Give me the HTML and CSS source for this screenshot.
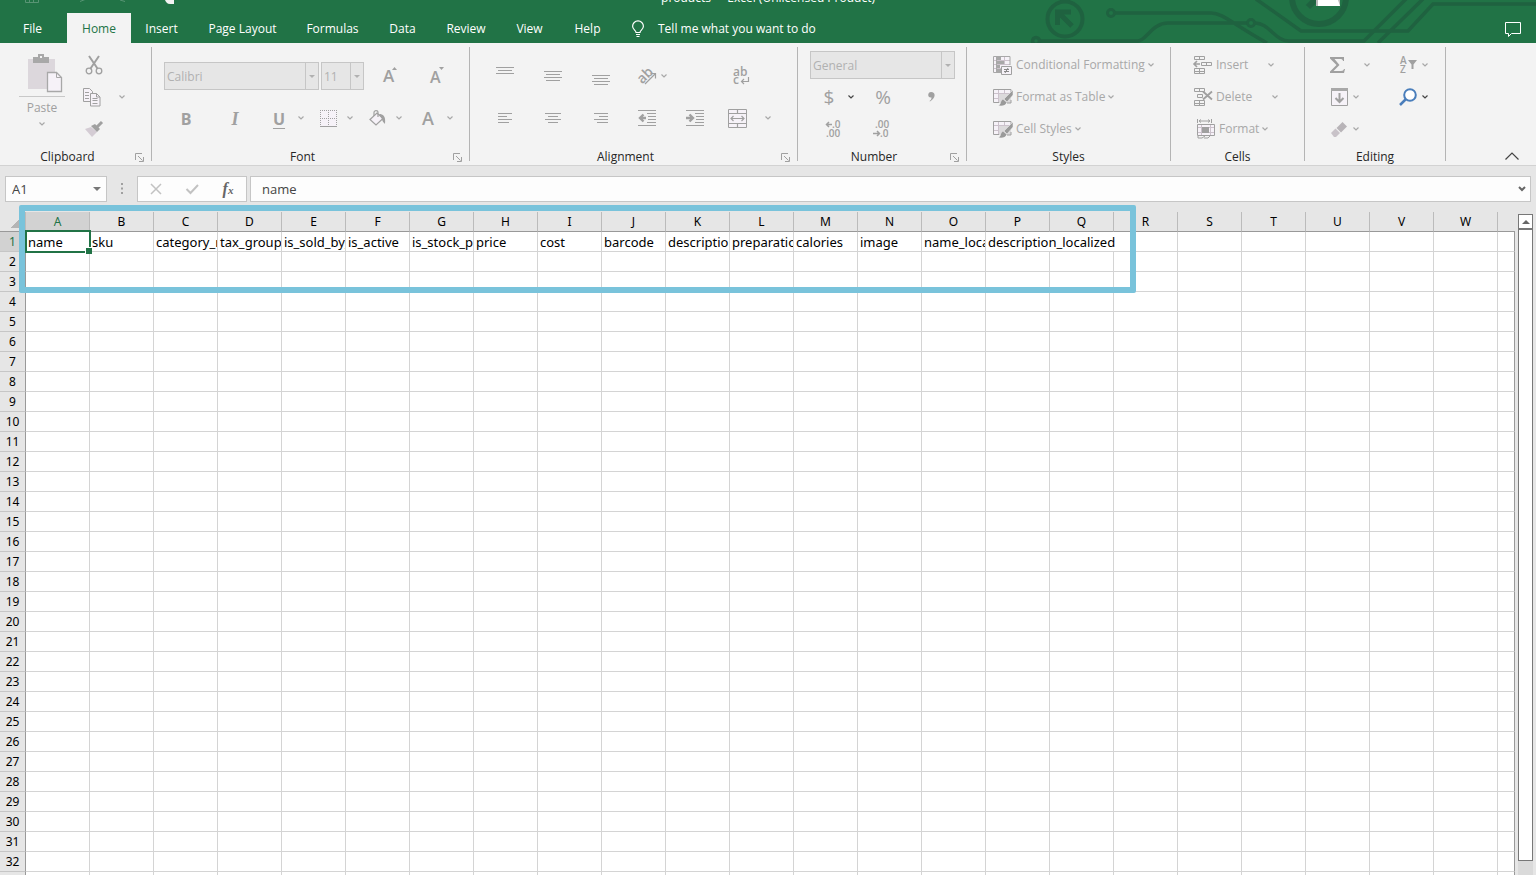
FILE: index.html
```
<!DOCTYPE html>
<html lang="en">
<head>
    <meta charset="UTF-8">
    <meta name="viewport" content="width=device-width, initial-scale=1.0">
    <title>products - Excel</title>
    <link rel="stylesheet" href="styles.css">
</head>
<body>

    <svg class="defs" aria-hidden="true">
        <symbol id="chev" viewBox="0 0 6 4"><path d="M.5 .5 3 3 5.500 .5" fill="none" stroke="currentColor" stroke-width="1.2"/></symbol>
        <symbol id="launch" viewBox="0 0 9 9"><path d="M.5 7V.5H7M3 3l4.500 4.500M8.500 4v4.500H4" fill="none" stroke="currentColor"/></symbol>
        <symbol id="brush-table" viewBox="0 0 20 18">
            <path d="M1 1h17v14H1z" fill="#f6f2f8"/>
            <path d="M6 6h12v9H6z" fill="#dcdadc"/>
            <path d="M5.500 1v14M11.500 1v5M1 5.500h17M1 10.500h5" stroke="#ccc2cc" fill="none"/>
            <path d="M18 5V1.500H.5v13H6M18 12v3h-4" fill="none" stroke="#a0a0a0"/>
            <path d="M20 2v5l-6 7-3-3z" fill="#9a9a9a" stroke="#f3f3f3" stroke-width=".5"/>
            <path d="M10 11.500l3.500 3c-1 3-4 3.500-8 3 3-1 2-5 4.500-6z" fill="#9a9a9a"/>
        </symbol>
    </svg>

    <header class="top">
        <svg class="circuit" viewBox="0 0 496 43" aria-hidden="true">
            <g fill="none" stroke="#1f6240" stroke-width="3.500">
                <circle cx="25" cy="19" r="17.500" stroke-width="4"/>
                <path d="M32 26 18 12M17.500 25V12H31" stroke-width="5"/>
                <circle cx="71" cy="13" r="3.500" stroke-width="3"/>
                <path d="M75 13h96c12 0 20 10 56 30M0 41h98c8 0 14-18 30-18h79"/>
                <circle cx="-4" cy="41" r="3.500"/>
                <circle cx="211" cy="23" r="3.500" stroke-width="3"/>
                <path d="M215 23c14 0 20 18 34 18h75L368-3M216-1l45 32h107l25-27h103M338 43 385-3"/>
                <circle cx="279" cy="-3" r="27" stroke-width="6"/>
                <path d="M268 7l12-12" stroke-width="6"/>
            </g>
            <path d="M276 0h24v6h-24z" fill="#b9b9b9"/>
            <path d="M278 0h20l2 6h-22z" fill="#fff"/>
        </svg>
        <div class="titlebar">
            <svg class="quick" width="160" height="5" viewBox="0 0 160 5" aria-hidden="true">
                <path d="M.5 0v2.500h13V0M4.500 2V0M8.500 2V0" fill="none" stroke="#589474"/>
                <path d="M55 1.500l5-2M95 0l5 1.500" stroke="#589474"/>
                <path d="M140 0h9v4h-4c-3 0-4-2-5-4z" fill="#f3f3f3"/>
            </svg>
            <div class="title">products&nbsp; -&nbsp; Excel (Unlicensed Product)</div>
        </div>
        <nav class="tabs">
            <a href="#">File</a>
            <a href="#" class="active">Home</a>
            <a href="#">Insert</a>
            <a href="#">Page Layout</a>
            <a href="#">Formulas</a>
            <a href="#">Data</a>
            <a href="#">Review</a>
            <a href="#">View</a>
            <a href="#">Help</a>
            <a href="#" class="tell">
                <svg width="12" height="17" viewBox="0 0 12 17"><path d="M4 11.500c0-2-3.400-3-3.400-6.200a5.200 5.200 0 0 1 10.800 0C11.400 8.500 8 9.500 8 11.500zM4 13.500h4M4.500 15.500h3" fill="none" stroke="#fff" stroke-width="1.200"/></svg>
                Tell me what you want to do
            </a>
            <button class="comment" aria-label="Comments">
                <svg width="16" height="15" viewBox="0 0 16 15"><path d="M.5.5h15v11h-9l-3 3v-3h-3z" fill="none" stroke="#fff"/></svg>
            </button>
        </nav>
    </header>

    <section class="ribbon">
        <div class="group clipboard">
            <div class="body">
                <button class="paste">
                    <svg width="36" height="39" viewBox="0 0 36 39">
                        <path d="M1 5h27v30H1z" fill="#dcd7dc"/>
                        <path d="M6 3h5V0h6v3h5v6H6z" fill="#a8a8a8"/><path d="M13 2h2v2h-2z" fill="#f3f3f3"/>
                        <path d="M20.500 18.500h9l5 5v14h-14z" fill="#f6f2f8" stroke="#a8a8a8" stroke-width="1.300"/>
                        <path d="M29.500 18.500v5h5" fill="none" stroke="#a8a8a8"/>
                    </svg>
                    <span>Paste</span>
                    <svg class="chev"><use href="#chev"/></svg>
                </button>
                <div class="stack">
                    <button class="tool" aria-label="Cut"><i><svg width="18" height="19" viewBox="0 0 18 19"><g fill="none" stroke="#a0a0a0" stroke-width="1.300"><circle cx="4" cy="15" r="2.800"/><circle cx="14" cy="15" r="2.800"/></g><path d="M4 0l8.500 12.500M14 0 5.500 12.500" stroke="#a0a0a0" stroke-width="2"/></svg></i></button>
                    <button class="tool copy" aria-label="Copy"><i><svg width="18" height="19" viewBox="0 0 18 19"><path d="M.5.5h6l3 3v10h-9z" fill="#f6f2f8" stroke="#a0a0a0"/><path d="M2 4.500h4M2 7.500h4M2 10.500h4" stroke="#a0a0a0"/><path d="M7.500 5.500h6l3.500 3.500v9H7.500z" fill="#f6f2f8" stroke="#a0a0a0"/><path d="M13.500 5.500V9H17M9.500 10.500h5M9.500 12.500h5M9.500 15.500h5" fill="none" stroke="#a0a0a0"/></svg></i><svg class="chev"><use href="#chev"/></svg></button>
                    <button class="tool" aria-label="Format Painter"><i><svg width="18" height="16" viewBox="0 0 18 16"><path d="M0 8l6-2 6 5-5 5z" fill="#d4ccd4"/><path d="M6 5l4-2 5 5-3 3z" fill="#a0a0a0"/><path d="M12 6l5-5" stroke="#a0a0a0" stroke-width="3"/></svg></i></button>
                </div>
            </div>
            <div class="label"><span>Clipboard</span><button aria-label="Clipboard settings"><svg width="9" height="9"><use href="#launch"/></svg></button></div>
        </div>

        <div class="group font">
            <div class="body two">
                <div class="row font-top">
                    <div class="combo"><select disabled aria-label="Font"><option>Calibri</option></select><b></b></div>
                    <div class="combo"><select disabled aria-label="Font size"><option>11</option></select><b></b></div>
                    <button class="tool" aria-label="Increase font size"><i><svg width="16" height="22" viewBox="0 0 16 22"><text x="1" y="17" class="glyph" font-size="17">A</text><path d="M10 5l2.500-3L15 5z" fill="#a0a0a0"/></svg></i></button>
                    <button class="tool" aria-label="Decrease font size"><i><svg width="16" height="22" viewBox="0 0 16 22"><text x="1" y="18" class="glyph" font-size="16">A</text><path d="M10 2l2.500 3L15 2z" fill="#a0a0a0"/></svg></i></button>
                </div>
                <div class="row font-bottom">
                    <button class="tool bold"><i>B</i></button>
                    <button class="tool italic"><i>I</i></button>
                    <button class="tool under"><i>U</i><svg class="chev"><use href="#chev"/></svg></button>
                    <button class="tool" aria-label="Borders"><i><svg width="17" height="17" viewBox="0 0 17 17"><path d="M0 0h17v17H0z" fill="#f6f2f8"/><path d="M0 .5h17M0 8.500h17M.5 0v17M8.500 0v17M16.500 0v17" stroke="#a0a0a0" stroke-dasharray="1 1"/><path d="M0 16.500h17" stroke="#a0a0a0"/></svg></i><svg class="chev"><use href="#chev"/></svg></button>
                    <button class="tool" aria-label="Fill colour"><i><svg width="17" height="16" viewBox="0 0 17 16"><path d="M1 9.500 8 3l6 5.500-7 6.500z" fill="#f6f2f8" stroke="#a0a0a0" stroke-width="1.200"/><path d="M5 6V2.500C5 0 9 0 9 2.500V7" fill="none" stroke="#a0a0a0" stroke-width="1.200"/><path d="M10 4c4 0 7 2 6 10-1-1-3-3-3-5z" fill="#a0a0a0"/></svg></i><svg class="chev"><use href="#chev"/></svg></button>
                    <button class="tool bold letter"><i>A</i><svg class="chev"><use href="#chev"/></svg></button>
                </div>
            </div>
            <div class="label"><span>Font</span><button aria-label="Font settings"><svg width="9" height="9"><use href="#launch"/></svg></button></div>
        </div>

        <div class="group align">
            <div class="body two">
                <div class="row align-top">
                    <button class="tool" aria-label="Top align"><i><svg width="18" height="19" viewBox="0 0 18 19"><path d="M0 .5h18M2 3.500h14M0 6.500h18" stroke="#a0a0a0"/></svg></i></button>
                    <button class="tool" aria-label="Middle align"><i><svg width="18" height="19" viewBox="0 0 18 19"><path d="M0 4.500h18M2 7.500h14M0 10.500h18M2 13.500h14" stroke="#a0a0a0"/></svg></i></button>
                    <button class="tool" aria-label="Bottom align"><i><svg width="18" height="19" viewBox="0 0 18 19"><path d="M0 8.500h18M2 11.500h14M0 14.500h18M2 17.500h14" stroke="#a0a0a0"/></svg></i></button>
                    <button class="tool orient" aria-label="Orientation"><i><svg width="20" height="18" viewBox="0 0 20 18"><text x="-8" y="4" class="glyph" font-size="14" transform="translate(8 9) rotate(-45)">ab</text><path d="M8 17 18 7M13.500 6.500H18.500v5" fill="none" stroke="#a0a0a0" stroke-width="1.200"/></svg></i><svg class="chev"><use href="#chev"/></svg></button>
                    <button class="tool" aria-label="Wrap text"><i><svg width="17" height="19" viewBox="0 0 17 19"><text x="0" y="9" class="glyph" font-size="12">ab</text><text x="0" y="17" class="glyph" font-size="12">c</text><path d="M15.500 10v4.500H8.500M11 12l-2.500 2.500L11 17" fill="none" stroke="#a0a0a0" stroke-width="1.200"/></svg></i></button>
                </div>
                <div class="row align-bottom">
                    <button class="tool" aria-label="Align left"><i><svg width="14" height="11" viewBox="0 0 14 11"><path d="M0 .5h14M0 3.500h9M0 6.500h14M0 9.500h11" stroke="#a0a0a0"/></svg></i></button>
                    <button class="tool" aria-label="Center"><i><svg width="16" height="11" viewBox="0 0 16 11"><path d="M0 .5h16M3 3.500h10M0 6.500h16M3 9.500h10" stroke="#a0a0a0"/></svg></i></button>
                    <button class="tool" aria-label="Align right"><i><svg width="14" height="11" viewBox="0 0 14 11"><path d="M0 .5h14M5 3.500h9M0 6.500h14M3 9.500h11" stroke="#a0a0a0"/></svg></i></button>
                    <button class="tool" aria-label="Decrease indent"><i><svg width="18" height="16" viewBox="0 0 18 16"><path d="M0 .5h18M9 3.500h9M10 6.500h8M10 9.500h8M9 12.500h9M0 15.500h18" stroke="#a0a0a0"/><path d="M8 8H2M5.500 4.500 2 8l3.500 3.500" fill="none" stroke="#a0a0a0" stroke-width="2.400"/></svg></i></button>
                    <button class="tool" aria-label="Increase indent"><i><svg width="18" height="16" viewBox="0 0 18 16"><path d="M0 .5h18M9 3.500h9M10 6.500h8M10 9.500h8M9 12.500h9M0 15.500h18" stroke="#a0a0a0"/><path d="M0 8h6M3.500 4.500 7 8l-3.500 3.500" fill="none" stroke="#a0a0a0" stroke-width="2.400"/></svg></i></button>
                    <button class="tool merge" aria-label="Merge and center"><i><svg width="19" height="19" viewBox="0 0 19 19"><path d="M.5.5h18v18H.5z" fill="#f6f2f8" stroke="#a0a0a0"/><path d="M0 4.500h19M0 14.500h19M9.500 0v4.500M9.500 14.500V19M2.500 9.500h14M5.500 7 3 9.500 5.500 12M13.500 7 16 9.500 13.500 12" fill="none" stroke="#a0a0a0" stroke-width="1.200"/></svg></i><svg class="chev"><use href="#chev"/></svg></button>
                </div>
            </div>
            <div class="label"><span>Alignment</span><button aria-label="Alignment settings"><svg width="9" height="9"><use href="#launch"/></svg></button></div>
        </div>

        <div class="group number">
            <div class="body">
                <div class="row"><div class="combo"><select disabled aria-label="Number format"><option>General</option></select><b></b></div></div>
                <div class="row number-mid">
                    <button class="tool big dark"><i>$</i><svg class="chev"><use href="#chev"/></svg></button>
                    <button class="tool big"><i>%</i></button>
                    <button class="tool" aria-label="Comma style"><i><svg width="7" height="10" viewBox="0 0 7 10"><path d="M3 0c5 0 5 6-1 9.500L1.500 9C3 8 3.500 7 3.500 5.500-1 6-.5 0 3 0z" fill="#a0a0a0"/></svg></i></button>
                </div>
                <div class="row number-low">
                    <button class="tool" aria-label="Increase decimal"><i><svg width="17" height="18" viewBox="0 0 17 18"><text x="7" y="8" class="small">.0</text><text x="1" y="17" class="small">.00</text><path d="M7 4.500H1.500M4 2 1.500 4.500 4 7" fill="none" stroke="#a0a0a0" stroke-width="1.500"/></svg></i></button>
                    <button class="tool" aria-label="Decrease decimal"><i><svg width="17" height="18" viewBox="0 0 17 18"><text x="2" y="8" class="small">.00</text><text x="7" y="17" class="small">.0</text><path d="M0 13.500h6M4 11l2.500 2.500L4 16" fill="none" stroke="#a0a0a0" stroke-width="1.500"/></svg></i></button>
                </div>
            </div>
            <div class="label"><span>Number</span><button aria-label="Number settings"><svg width="9" height="9"><use href="#launch"/></svg></button></div>
        </div>

        <div class="group styles">
            <div class="body">
                <button class="wide"><svg width="20" height="19" viewBox="0 0 20 19"><path d="M.5.500h16v16H.5z" fill="#f6f2f8"/><path d="M4 1h4v3H4zM4 5h7v3H4zM4 9h3v3H4zM4 13h4v3H4z" fill="#a8a8a8"/><path d="M1 4.500h16M1 8.500h16M1 12.500h8M11.500 1v8" stroke="#ccc2cc"/><path d="M17 9V.5H.5v16H8M3.500 0v17" fill="none" stroke="#a8a8a8"/><path d="M8.500 10.500h10v8h-10z" fill="#f6f2f8" stroke="#a0a0a0"/><path d="M11 13.500h5M11 15.500h5M15 12l-3 5" stroke="#888"/></svg><span>Conditional Formatting</span><svg class="chev"><use href="#chev"/></svg></button>
                <button class="wide"><svg width="20" height="18"><use href="#brush-table"/></svg><span>Format as Table</span><svg class="chev"><use href="#chev"/></svg></button>
                <button class="wide"><svg width="20" height="18"><use href="#brush-table"/></svg><span>Cell Styles</span><svg class="chev"><use href="#chev"/></svg></button>
            </div>
            <div class="label"><span>Styles</span></div>
        </div>

        <div class="group cells">
            <div class="body">
                <button class="wide far"><svg width="20" height="20" viewBox="0 0 20 20"><path d="M1.500 1.500h10v3h-10zM6.500 1.500v3M1.500 13.500h10v5h-10zM1 16.500h10M6.500 13.500v5M8.500 7.500h10v3h-10zM13.500 7.500v3" fill="none" stroke="#a0a0a0"/><path d="M7 9H1M4 6 1 9l3 3" fill="none" stroke="#a0a0a0" stroke-width="1.600"/></svg><span>Insert</span><svg class="chev"><use href="#chev"/></svg></button>
                <button class="wide far"><svg width="20" height="20" viewBox="0 0 20 20"><path d="M1.500 1.500h10v3h-10zM6.500 1.500v3M1.500 13.500h10v5h-10zM1 16.500h10M6.500 13.500v5M4.500 7.500h5v3h-5z" fill="none" stroke="#a0a0a0"/><path d="M10 4.500l9 8M19 4.500l-9 8" stroke="#a0a0a0" stroke-width="1.800"/></svg><span>Delete</span><svg class="chev"><use href="#chev"/></svg></button>
                <button class="wide format"><svg width="20" height="20" viewBox="0 0 20 20"><path d="M1.500 0v4M15.500 0v4M3 2h11M5 .5 3 2l2 1.500M12 .5 14 2l-2 1.500" fill="none" stroke="#a0a0a0"/><path d="M1.500 5.500h17v11h-17z" fill="#f6f2f8" stroke="#a0a0a0"/><path d="M5.500 6v10M14.500 6v10M2 8.500h16M2 13.500h16" stroke="#ccc2cc"/><path d="M6 8h7v6H6z" fill="#a0a0a0"/><path d="M2 17v2h4l3-2M8 19h4l2-2" fill="none" stroke="#a0a0a0"/></svg><span>Format</span><svg class="chev"><use href="#chev"/></svg></button>
            </div>
            <div class="label"><span>Cells</span></div>
        </div>

        <div class="group editing">
            <div class="body">
                <div class="row edit-row">
                    <button class="tool sum" aria-label="AutoSum"><i><svg width="15" height="16" viewBox="0 0 15 16"><path d="M0 0h14v4h-1c0-1-1-2-2-2H4.500L9.500 8l-6 6H11c2 0 2.500-1 3-2h1l-1 4H0v-1.500L6.500 8 0 1.500z" fill="#a0a0a0"/></svg></i><svg class="chev"><use href="#chev"/></svg></button>
                    <button class="tool" aria-label="Sort and filter"><i><svg width="17" height="17" viewBox="0 0 17 17"><text x="0" y="7" class="small">A</text><text x="0" y="16" class="small">Z</text><path d="M8 3h9l-3.500 4.500V12h-2V7.500z" fill="#a0a0a0"/></svg></i><svg class="chev"><use href="#chev"/></svg></button>
                </div>
                <div class="row edit-row">
                    <button class="tool" aria-label="Fill"><i><svg width="17" height="18" viewBox="0 0 17 18"><path d="M.5.500h16v17H.5z" fill="#f6f2f8" stroke="#a0a0a0"/><path d="M0 0h17v3H0z" fill="#a8a8a8"/><path d="M8.500 5v9M4.500 10l4 4 4-4" fill="none" stroke="#a0a0a0" stroke-width="2"/></svg></i><svg class="chev"><use href="#chev"/></svg></button>
                    <button class="tool dark" aria-label="Find and select"><i><svg width="18" height="18" viewBox="0 0 18 18"><circle cx="11" cy="7" r="5.800" fill="#fff" stroke="#4a7ebb" stroke-width="2"/><path d="M7 11l-6 6" stroke="#4a7ebb" stroke-width="2.500"/></svg></i><svg class="chev"><use href="#chev"/></svg></button>
                </div>
                <div class="row edit-row">
                    <button class="tool" aria-label="Clear"><i><svg width="16" height="15" viewBox="0 0 16 15"><path d="M5.500 6l6-6L16 4.500l-6 6z" fill="#b8b4b8"/><path d="M0 11l4.500-4.500L9 11l-4 4H3z" fill="#c8c2c8"/></svg></i><svg class="chev"><use href="#chev"/></svg></button>
                </div>
            </div>
            <div class="label"><span>Editing</span></div>
        </div>

        <button class="collapse" aria-label="Collapse the ribbon"><svg width="14" height="8" viewBox="0 0 14 8"><path d="M.5 7.500 7 1l6.500 6.500" fill="none" stroke="#444" stroke-width="1.200"/></svg></button>
    </section>

    <section class="formula-bar">
        <div class="name-box"><input type="text" value="A1" aria-label="Name box"><b></b></div>
        <svg width="3" height="12" viewBox="0 0 3 12" aria-hidden="true"><path d="M0 1h2M0 5.500h2M0 10h2" stroke="#a0a0a0" stroke-width="2"/></svg>
        <div class="fx-box">
            <button aria-label="Cancel"><svg width="12" height="10" viewBox="0 0 12 10"><path d="M1 0l10 10M11 0 1 10" stroke="#c2c2c2" stroke-width="1.500"/></svg></button>
            <button aria-label="Enter"><svg width="13" height="10" viewBox="0 0 13 10"><path d="M.5 5l4 4L12 1" fill="none" stroke="#c2c2c2" stroke-width="2"/></svg></button>
            <button class="fx">f<small>x</small></button>
        </div>
        <div class="formula"><input type="text" value="name" aria-label="Formula"><svg width="8" height="6" viewBox="0 0 8 6"><path d="M1 1l3 3 3-3" fill="none" stroke="#666" stroke-width="2"/></svg></div>
    </section>

    <main class="workbook">
        <div class="sheet">
            <table>
                <thead><tr id="letters"><th class="corner"></th></tr></thead>
                <tbody id="rows"></tbody>
            </table>
        </div>
        <div class="scrollbar">
            <button aria-label="Scroll up"></button>
            <div class="track"><div class="thumb"></div></div>
        </div>
        <div class="highlight"></div>
    </main>

    <script>
        const fields = ["name", "sku", "category_reference", "tax_group_reference", "is_sold_by_weight", "is_active",
            "is_stock_product", "price", "cost", "barcode", "description", "preparation_time", "calories", "image",
            "name_localized", "description_localized"];
        const letters = "ABCDEFGHIJKLMNOPQRSTUVW".split("").concat("");
        const head = document.getElementById("letters");
        const body = document.getElementById("rows");

        letters.forEach((letter, i) => {
            const th = document.createElement("th");
            th.textContent = letter;
            if (i === 0) th.className = "selected";
            if (!letter) th.className = "rest";
            head.appendChild(th);
        });

        for (let r = 1; r <= 60; r++) {
            const tr = body.insertRow();
            const th = document.createElement("th");
            th.textContent = r;
            if (r === 1) th.className = "selected";
            tr.appendChild(th);
            for (let c = 0; c < letters.length; c++) {
                const td = tr.insertCell();
                if (r > 1) continue;
                td.textContent = fields[c] || "";
                if (c === 0) td.className = "active-cell";
                // last field spills over the two empty cells beside it
                if (c === fields.length - 1) {
                    td.colSpan = 3;
                    c += 2;
                }
            }
        }
    </script>

</body>
</html>
```

FILE: styles.css
```
* {
    box-sizing: border-box;
}

body {
    margin: 0;
    height: 100vh;
    display: flex;
    flex-direction: column;
    overflow: hidden;
    background: #e6e6e6;
    font-family: 'Open Sans', 'Noto Sans', sans-serif;
    font-size: 12px;
    color: #262626;
}

button {
    border: 0;
    padding: 0;
    background: none;
    font: inherit;
    color: #a0a0a0;
}

svg {
    display: block;
    flex: none;
    overflow: visible;
}

.defs {
    position: absolute;
    width: 0;
    height: 0;
}

/* title and tabs */
.top {
    position: relative;
    background: #217346;
    color: white;
    overflow: hidden;
    flex: none;
}

.circuit {
    position: absolute;
    right: 0;
    top: 0;
    width: 496px;
    height: 43px;
}

.titlebar {
    height: 13px;
    display: grid;
    grid-template-columns: 1fr auto 1fr;
    overflow: hidden;
}

.quick {
    margin-left: 25px;
}

.title {
    line-height: 16px;
    margin-top: -10px;
}

.tabs {
    position: relative;
    display: grid;
    grid-template-columns: 65px 64px 65px 97px 83px 57px 70px 57px 59px auto 1fr;
    height: 30px;
}

.tabs a {
    color: white;
    text-decoration: none;
    text-align: center;
    line-height: 32px;
    white-space: nowrap;
}

.tabs a.active {
    background: #f3f3f3;
    color: #217346;
    margin: 0 -2px 0 2px;
}

.tabs a.tell {
    display: flex;
    align-items: center;
    gap: 14px;
    padding-left: 15px;
    line-height: 30px;
}

.comment {
    justify-self: end;
    margin-right: 15px;
}

/* ribbon */
.ribbon {
    display: flex;
    flex: none;
    height: 123px;
    padding: 4px 0;
    background: #f3f3f3;
    border-bottom: 1px solid #d2d2d2;
}

.group {
    flex: none;
    display: flex;
    flex-direction: column;
    border-right: 1px solid #b4b4b4;
}

.clipboard { width: 152px; }
.font { width: 318px; }
.align { width: 328px; }
.number { width: 169px; }
.styles { width: 204px; }
.cells { width: 134px; }
.editing { width: 141px; }

.body {
    height: 101px;
    padding-top: 2px;
}

.body.two {
    padding-top: 8px;
}

.label {
    display: flex;
    height: 13px;
    line-height: 18px;
    color: #262626;
}

.label span {
    flex: 1;
    text-align: center;
}

.label button {
    padding: 5px 7px 0 0;
}

.row {
    display: grid;
    align-items: center;
    height: 32px;
}

.two .row {
    height: 42px;
}

.tool {
    display: flex;
    align-items: center;
    height: 28px;
}

.tool i {
    width: 28px;
    display: flex;
    justify-content: center;
    font-style: normal;
}

.chev {
    width: 6px;
    height: 4px;
    margin: 0 5px;
    color: #a8a8a8;
}

.dark .chev {
    color: #444;
}

.glyph {
    font-weight: 600;
    fill: #a0a0a0;
}

.small {
    font-size: 10px;
    font-weight: 600;
    fill: #a0a0a0;
}

.clipboard .body {
    display: flex;
    padding-left: 19px;
}

.paste {
    width: 46px;
    display: flex;
    flex-direction: column;
    align-items: center;
    padding-top: 5px;
}

.paste > svg:first-child {
    margin-left: 5px;
}

.paste span {
    width: 100%;
    margin: 3px 0 6px;
    padding-top: 3px;
    line-height: 16px;
    border-top: 1px solid #c8c8c8;
}

.stack {
    padding-left: 15px;
}

.stack .tool {
    height: 32px;
}

.copy i {
    width: 24px;
}

.copy .chev {
    margin-left: 15px;
}

.font .row {
    padding-left: 20px;
}

.font .font-top {
    padding-left: 12px;
    grid-template-columns: 157px 55px 47px 28px;
}

.font-bottom {
    grid-template-columns: 49px 44px 49px 49px 51px 44px;
}

.combo {
    position: relative;
    height: 28px;
    width: 155px;
    display: flex;
    border: 1px solid #c6c6c6;
    background: #e6e6e6;
}

.combo + .combo {
    width: 43px;
}

.number .combo {
    width: 145px;
}

.combo select {
    flex: 1;
    min-width: 0;
    appearance: none;
    border: 0;
    padding: 0 2px;
    background: none;
    font: inherit;
    color: #b1b1b1;
    opacity: 1;
}

.combo b {
    width: 13px;
    border-left: 1px solid #c6c6c6;
    display: flex;
    align-items: center;
    justify-content: center;
}

.combo b::after,
.name-box b::after {
    content: "";
    border: 3px solid transparent;
    border-top-color: #b1b1b1;
    border-bottom: 0;
}

.bold i,
.italic i,
.under i {
    font-size: 16px;
    font-weight: 700;
    padding-top: 2px;
}

.letter i {
    font-size: 18px;
    font-weight: 600;
    padding-top: 0;
}

.italic i {
    font-family: 'Liberation Serif', serif;
    font-style: italic;
    font-size: 18px;
}

.under i {
    text-decoration: underline;
    text-underline-offset: 3px;
    text-decoration-thickness: 1px;
}

.align .row {
    padding-left: 21px;
}

.align-top {
    grid-template-columns: 48px 48px 46px 94px 44px;
}

.align-bottom {
    grid-template-columns: 48px 48px 46px 48px 42px 60px;
}

.orient .chev {
    margin-left: 0;
}

.merge .chev {
    margin-left: 14px;
}

.number .row {
    padding-left: 12px;
}

.number .number-mid {
    padding-left: 17px;
    grid-template-columns: 54px 48px 28px;
}

.number .number-low {
    padding-left: 21px;
    grid-template-columns: 48px 28px;
}

.big i {
    font-size: 19px;
}

.number-mid .chev {
    margin-left: 5px;
}

.styles .body {
    padding-left: 26px;
}

.cells .body {
    padding-left: 22px;
}

.wide {
    display: flex;
    align-items: center;
    height: 32px;
    gap: 3px;
    line-height: 18px;
    color: #a8a8a8;
}

.wide .chev {
    margin: 0;
}

.far .chev {
    margin-left: 17px;
}

.format {
    padding-left: 3px;
}

.editing .edit-row {
    padding-left: 20px;
    grid-template-columns: 69px 44px;
}

.edit-row .chev {
    margin-left: 0;
}

.edit-row .sum i {
    width: 24px;
}

.edit-row .sum .chev {
    margin-left: 15px;
}

.collapse {
    margin: auto 17px 1px auto;
}

/* formula bar */
.formula-bar {
    display: flex;
    flex: none;
    align-items: center;
    height: 46px;
    padding: 0 5px;
}

.formula-bar > svg {
    margin: 0 13px 0 14px;
}

.name-box,
.fx-box,
.formula {
    display: flex;
    align-items: center;
    height: 26px;
    background: #fdfdfd;
    border: 1px solid #c6c6c6;
}

.name-box {
    width: 102px;
    padding-right: 5px;
}

.name-box b::after {
    display: block;
    border-width: 4px;
    border-bottom: 0;
    border-top-color: #777;
}

.fx-box {
    width: 110px;
    margin-right: 3px;
}

.fx-box button {
    flex: 1;
    display: flex;
    justify-content: center;
}

.fx-box .fx {
    display: block;
    font: italic bold 16px 'Liberation Serif', serif;
    color: #666;
}

.fx small {
    font-size: 11px;
}

.formula {
    flex: 1;
    padding-right: 4px;
}

.formula-bar input {
    flex: 1;
    min-width: 0;
    border: 0;
    padding: 0 6px;
    background: none;
    font: inherit;
    font-size: 13px;
    color: #444;
}

.formula-bar .formula input {
    padding-left: 11px;
}

/* sheet */
.workbook {
    position: relative;
    flex: 1;
    min-height: 0;
    display: flex;
}

.sheet {
    flex: 1;
    overflow: hidden;
}

table {
    width: 100%;
    table-layout: fixed;
    border-collapse: separate;
    border-spacing: 0;
    font-family: 'Noto Sans', 'Open Sans', sans-serif;
    font-size: 13px;
    line-height: 18px;
    color: black;
}

th,
td {
    height: 20px;
    padding: 1px 0 0;
    font-weight: 400;
    white-space: nowrap;
    overflow: hidden;
}

thead th {
    width: 64px;
    padding: 0;
    font-size: 12px;
    border-bottom: 1px solid #999;
    border-right: 1px solid #bbb;
    background: #e6e6e6;
}

thead .corner {
    width: 26px;
    background: linear-gradient(135deg, transparent 50%, #b4b4b4 50%) 10px 7px / 10px 9px no-repeat #e6e6e6;
}

thead .rest {
    width: auto;
    border-right: 0;
}

tbody th {
    font-size: 12px;
    border-right: 1px solid #999;
    border-bottom: 1px solid #c6c6c6;
    background: #e6e6e6;
}

th.selected {
    background: #d2d2d2;
    color: #217346;
}

td {
    padding-left: 2px;
    background: white;
    border-right: 1px solid #d4d4d4;
    border-bottom: 1px solid #d4d4d4;
}

td:last-child {
    border-right-color: #999;
}

.active-cell {
    position: relative;
    overflow: visible;
}

/* selection frame with its fill handle */
.active-cell::before {
    content: "";
    position: absolute;
    inset: -2px -2px -2px -1px;
    border: 2px solid #217346;
}

.active-cell::after {
    content: "";
    position: absolute;
    right: -3px;
    bottom: -3px;
    width: 6px;
    height: 6px;
    background: #217346;
    border: 1px solid white;
    border-width: 1px 0 0 1px;
}

.scrollbar {
    flex: none;
    width: 21px;
    padding: 2px 3px 0;
    display: flex;
    flex-direction: column;
}

.scrollbar button {
    height: 15px;
    border: 1px solid #777;
    background: white;
    display: flex;
    align-items: center;
    justify-content: center;
}

.scrollbar button::after {
    content: "";
    border: 4px solid transparent;
    border-top: 0;
    border-bottom-color: #666;
}

.track {
    flex: 1;
    display: flex;
    padding-bottom: 14px;
    background: #dadada;
}

.thumb {
    flex: 1;
    border: 1px solid #777;
    background: white;
}

/* frame round the imported columns */
.highlight {
    position: absolute;
    left: 19px;
    top: -7px;
    width: 1117px;
    height: 88px;
    border: 6px solid #79c3db;
    border-radius: 2px;
    pointer-events: none;
}
```
